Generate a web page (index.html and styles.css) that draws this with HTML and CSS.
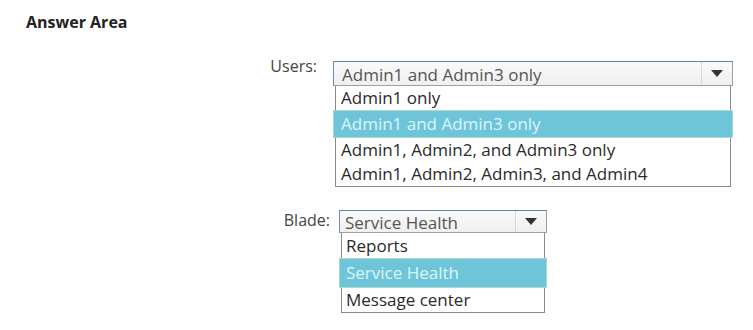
FILE: index.html
```html
<!DOCTYPE html>
<html lang="en">
<head>
  <meta charset="UTF-8" />
  <title>Answer Area</title>
  <link rel="stylesheet" href="styles.css">
</head>
<body>
  <h2 class="title">Answer Area</h2>

  <div class="field users">
    <span class="label">Users:</span>
    <div class="dropdown">
      <div class="select">
        <span class="value">Admin1 and Admin3 only</span>
        <span class="arrow"></span>
      </div>
      <ul class="list">
        <li>Admin1 only</li>
        <li class="picked">Admin1 and Admin3 only</li>
        <li>Admin1, Admin2, and Admin3 only</li>
        <li>Admin1, Admin2, Admin3, and Admin4</li>
      </ul>
    </div>
  </div>

  <div class="field blade">
    <span class="label">Blade:</span>
    <div class="dropdown">
      <div class="select">
        <span class="value">Service Health</span>
        <span class="arrow"></span>
      </div>
      <ul class="list">
        <li>Reports</li>
        <li class="picked">Service Health</li>
        <li>Message center</li>
      </ul>
    </div>
  </div>
</body>
</html>
```

FILE: styles.css
```css
body {
  margin: 0;
  background: #ffffff;
  font-family: 'Open Sans', 'Noto Sans', sans-serif;
  color: #333;
}

.title {
  margin: 0;
  padding: 11px 0 0 26px;
  font-size: 16px;
  font-weight: 700;
  line-height: 22px;
  color: #222;
}

.field {
  display: flex;
  align-items: flex-start;
}

.users {
  margin-top: 28px;
}

.blade {
  margin-top: 23px;
}

.label {
  font-size: 16px;
  line-height: 20px;
  color: #444;
  text-align: right;
  margin-top: -5px;
}

.users .label { width: 317px; margin-right: 16px; }
.blade .label { width: 330px; margin-right: 9px; margin-top: 0; }

.dropdown {
  display: flex;
  flex-direction: column;
}

.users .dropdown { width: 400px; }
.blade .dropdown { width: 208px; }

.select {
  display: flex;
  align-items: stretch;
  border: 1px solid #9aa0a8;
  border-top-color: #5f7fb3;
  border-left-color: #6f8bb8;
  background: linear-gradient(#fafafa, #efefef);
}

.users .select { height: 23px; }
.blade .select { height: 21px; }

.value {
  flex: 1;
  padding-left: 8px;
  font-size: 17px;
  line-height: 25px;
  color: #555;
  white-space: nowrap;
}

.blade .value { line-height: 23px; padding-left: 5px; }

.arrow {
  width: 30px;
  border-left: 1px solid #d8d8d8;
  display: flex;
  align-items: center;
  justify-content: center;
}

.arrow::after {
  content: "";
  border-left: 6px solid transparent;
  border-right: 6px solid transparent;
  border-top: 7px solid #333;
}

.list {
  list-style: none;
  margin: 0 2px;
  padding: 0;
  border: 1px solid #8a8a8a;
  border-top: none;
  background: #fff;
}

.list li {
  font-size: 17px;
  height: 24px;
  line-height: 24px;
  padding-left: 5px;
  color: #2a2a2a;
  white-space: nowrap;
}

.blade .list li:first-child { height: 25px; line-height: 25px; }
.blade .list li { padding-left: 4px; }

.list li.picked {
  background: #6ec5da;
  color: #dcf5f9;
  border: 1px solid #a8dcc8;
  margin: 0 -3px;
  padding-left: 7px;
  height: 26px;
  line-height: 26px;
}

.blade .list li.picked { height: 28px; line-height: 28px; padding-left: 6px; }
```
